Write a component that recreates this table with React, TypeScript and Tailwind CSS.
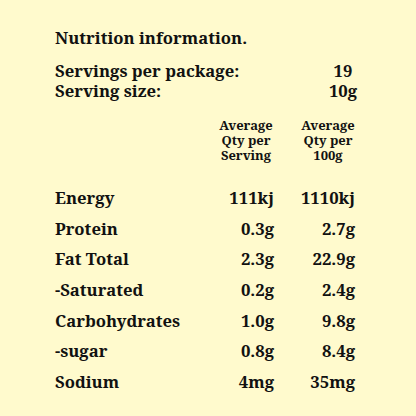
import React from 'react';

const rows = [
  { name: 'Energy', serving: '111kj', per100: '1110kj' },
  { name: 'Protein', serving: '0.3g', per100: '2.7g' },
  { name: 'Fat Total', serving: '2.3g', per100: '22.9g' },
  { name: '-Saturated', serving: '0.2g', per100: '2.4g' },
  { name: 'Carbohydrates', serving: '1.0g', per100: '9.8g' },
  { name: '-sugar', serving: '0.8g', per100: '8.4g' },
  { name: 'Sodium', serving: '4mg', per100: '35mg' },
];

const App: React.FC = () => {
  return (
    <div
      className="w-[416px] h-[416px] bg-[#fffacd] text-[#111] font-bold pl-[55px] pt-[27px]"
      style={{ fontFamily: '"Noto Serif", "DejaVu Serif", "Liberation Serif", serif' }}
    >
      <h1 className="text-[16.7px] leading-[22px]">Nutrition information.</h1>

      {/* Servings */}
      <div className="mt-[12px] text-[16.7px] leading-[20px]">
        <div className="flex">
          <span className="w-[260px]">Servings per package:</span>
          <span className="w-[56px] text-center">19</span>
        </div>
        <div className="flex">
          <span className="w-[260px]">Serving size:</span>
          <span className="w-[56px] text-center">10g</span>
        </div>
      </div>

      {/* Column headers */}
      <div className="grid grid-cols-[160px_62px_20px_62px] mt-[17px] text-[13px] leading-[15px]">
        <div />
        <div className="text-center">Average<br />Qty per<br />Serving</div>
        <div />
        <div className="text-center">Average<br />Qty per<br />100g</div>
      </div>

      {/* Nutrients */}
      <div className="mt-[25px] flex flex-col gap-[10.2px] text-[16.7px] leading-[20.5px]">
        {rows.map((r) => (
          <div key={r.name} className="grid grid-cols-[157px_62px_19px_62px]">
            <span>{r.name}</span>
            <span className="text-right">{r.serving}</span>
            <span />
            <span className="text-right">{r.per100}</span>
          </div>
        ))}
      </div>
    </div>
  );
};

export default App;
